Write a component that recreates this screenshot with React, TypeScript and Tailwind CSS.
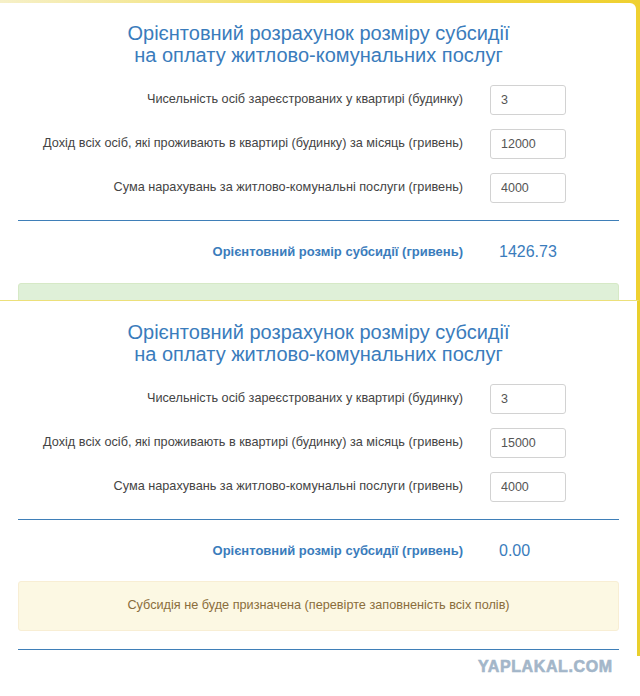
import { useState } from 'react'

type Field = { label: string; value: string }

type CalcProps = {
  fields: Field[]
  result: string
  alert: 'success' | 'warning'
  offset?: 'first' | 'second'
}

const font = { fontFamily: '"Liberation Sans", Arial, sans-serif' }

function SubsidyCalc({ fields, result, alert, offset = 'first' }: CalcProps): JSX.Element {
  const [values, setValues] = useState(fields.map((f) => f.value))

  return (
    <div
      className={`pl-[18px] pr-[17px] text-[#333] ${offset === 'first' ? 'pt-[19px]' : 'pt-[20px]'}`}
      style={font}
    >
      <h3 className="text-center text-[20px] leading-[22px] text-[#3a7cbc]">
        Орієнтовний розрахунок розміру субсидії
        <br />
        на оплату житлово-комунальних послуг
      </h3>

      <div className="mt-[19px] flex flex-col gap-[14px]">
        {fields.map((field, i) => (
          <div key={field.label} className="flex items-center">
            <label className="w-[445px] text-right text-[12.7px] text-[#444]">{field.label}</label>
            <input
              type="text"
              value={values[i]}
              onChange={(event) =>
                setValues((prev) => prev.map((v, j) => (j === i ? event.target.value : v)))
              }
              className="ml-[27px] h-[30px] w-[76px] rounded-[3px] border border-[#d2d2d2] px-[10px] text-[12.5px] text-[#555] outline-none"
            />
          </div>
        ))}
      </div>

      <div className="mt-[17px] h-px bg-[#3f7fb8]" />

      <div className="flex h-[62px] items-center">
        <span className="w-[445px] text-right text-[13px] font-bold text-[#3a7cbc]">
          Орієнтовний розмір субсидії (гривень)
        </span>
        <span className="ml-[36px] text-[16px] text-[#3a7cbc]">{result}</span>
      </div>

      {alert === 'success' ? (
        <div className="h-[30px] rounded-[3px] border border-[#d6e9c6] bg-[#dff0d8]" />
      ) : (
        <div className="-mt-px flex h-[50px] items-center justify-center rounded-[3px] border border-[#f8eed4] bg-[#fcf8e3] text-[12.7px] text-[#8a6d3b]">
          Субсидія не буде призначена (перевірте заповненість всіх полів)
        </div>
      )}
    </div>
  )
}

export default function App(): JSX.Element {
  return (
    <div className="relative h-[696px] w-[640px] overflow-hidden bg-white">
      {/* first capture: white card on a yellow desktop */}
      <div className="h-[300px] bg-gradient-to-r from-[#f6f0c8] via-[#f2dc4a] to-[#efd030] pr-[4px] pt-[3px]">
        <div className="h-full overflow-hidden rounded-tr-[6px] bg-white">
          <SubsidyCalc
            fields={[
              { label: 'Чисельність осіб зареєстрованих у квартирі (будинку)', value: '3' },
              {
                label: 'Дохід всіх осіб, які проживають в квартирі (будинку) за місяць (гривень)',
                value: '12000',
              },
              { label: 'Сума нарахувань за житлово-комунальні послуги (гривень)', value: '4000' },
            ]}
            result="1426.73"
            alert="success"
          />
        </div>
      </div>

      {/* second capture */}
      <div className="h-[356px] border-r-[3px] border-t border-r-[#e9cf2c] border-t-[#ece07a] pr-px">
        <SubsidyCalc
          fields={[
            { label: 'Чисельність осіб зареєстрованих у квартирі (будинку)', value: '3' },
            {
              label: 'Дохід всіх осіб, які проживають в квартирі (будинку) за місяць (гривень)',
              value: '15000',
            },
            { label: 'Сума нарахувань за житлово-комунальні послуги (гривень)', value: '4000' },
          ]}
          result="0.00"
          alert="warning"
          offset="second"
        />
        <div className="ml-[18px] mr-[17px] mt-[18px] h-px bg-[#3f7fb8]" />
      </div>

      <div
        className="absolute left-[478px] top-[655px] text-[16px] font-black tracking-[0.6px] text-[#a3b6c9] [-webkit-text-stroke:0.6px_#a3b6c9]"
        style={font}
      >
        YAPLAKAL.COM
      </div>
    </div>
  )
}
